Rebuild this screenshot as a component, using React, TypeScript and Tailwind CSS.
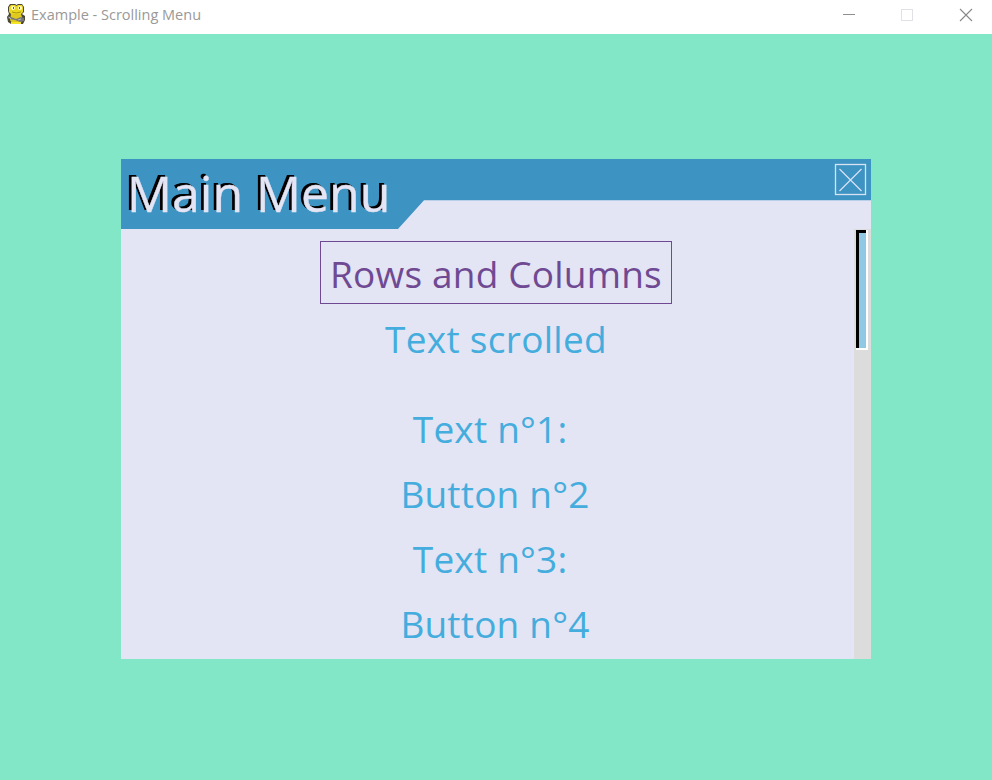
import React from "react";

const rows = ["Text n°1: ", "Button n°2", "Text n°3: ", "Button n°4"];

function SnakeIcon() {
  return (
    <svg width="20" height="22" viewBox="0 0 20 22" className="block shrink-0">
      <path d="M4 1h5l1.5 1L12 1h4l2 3v5l-2 2 3 2v4l-2 4H5l-3-2-1-5 2-3-1-3V4z" fill="#4a4732" />
      <path d="M5 2h4l1.5 1L12 2h4l1 2v5l-2 2H5L3 9V4z" fill="#ecd820" />
      <circle cx="7" cy="5" r="2" fill="#fffbc8" />
      <circle cx="14" cy="5" r="2" fill="#fffbc8" />
      <path d="M7.5 4v2M13.5 4v2" stroke="#6c6418" />
      <path d="M6 9q4 2 9 0" stroke="#a89410" fill="none" />
      <path d="M5 11h10l1 3-1 6H6l-2-3z" fill="#dfc91d" />
      <path d="M1 13l4 1 5 2 5-2 3 1v3l-4 1-5-2-6-1z" fill="#77777b" />
      <path d="M3 14l2 2M12 17l3-1" stroke="#b9b9bd" />
      <path d="M5 20h10" stroke="#f4e52b" strokeWidth="2" />
    </svg>
  );
}

function TitleBar() {
  return (
    <header className="flex h-[34px] items-start bg-white">
      <div className="flex h-[30px] flex-1 items-center pl-[6px]">
        <div className="-mt-[3px]">
          <SnakeIcon />
        </div>
        <span className="ml-[5px] whitespace-nowrap text-[14.5px] leading-[30px] text-[#999999]">
          Example - Scrolling Menu
        </span>
      </div>
      <svg width="150" height="34" viewBox="842 0 150 34" fill="none">
        <path d="M843 14.5h12" stroke="#8f8f8f" />
        <rect x="901.5" y="9.5" width="11" height="11" stroke="#e0e0e6" />
        <path d="M960 9l12 12M972 9l-12 12" stroke="#888888" strokeWidth="1.1" />
      </svg>
    </header>
  );
}

export default function App() {
  return (
    <div className="flex h-[780px] w-[992px] flex-col overflow-hidden bg-[#82e7c7] font-['Open_Sans',sans-serif]">
      <TitleBar />
      <main className="flex flex-1 justify-center pt-[125px]">
        <section className="relative flex h-[500px] w-[750px] flex-col bg-[#e3e4f4]">
          <svg width="750" height="70" viewBox="0 0 750 70" className="absolute left-0 top-0">
            <path d="M0 0H750V41.3H303L277 70H0z" fill="#3d94c3" />
          </svg>
          <div className="relative flex h-[70px] shrink-0 justify-between">
            <h1 className="ml-[6px] whitespace-nowrap text-[50px] leading-[69px] text-[#e3e4f4] [-webkit-text-stroke:0.4px_#e3e4f4] [text-shadow:-2px_-2px_0_#000,-3px_-2px_0_#000]">
              Main Menu
            </h1>
            <button className="mr-[3px] mt-[4px] h-[34px] w-[34px]" aria-label="Close">
              <svg width="34" height="34" viewBox="0 0 34 34" fill="none" stroke="#d9e2f2">
                <rect x="1.5" y="1.5" width="30" height="30" strokeWidth="1.3" />
                <path d="M5.5 6l22 22M27.5 6L5.5 28" strokeWidth="1.2" />
              </svg>
            </button>
          </div>
          <div className="relative flex min-h-0 flex-1">
            <div className="-mr-[17px] flex flex-1 flex-col items-center pt-[12px] text-[37px] text-[#44addd]">
              <div className="flex h-[63px] w-[352px] items-center justify-center border border-[#6f4a93] pt-[2px] text-[#6f4a93]">
                <span className="whitespace-pre tracking-[0.2px]">Rows and Columns</span>
              </div>
              <div className="flex h-[67px] items-center pt-[2px]">
                <span className="whitespace-pre tracking-[0.3px]">Text scrolled</span>
              </div>
              <div className="mt-[25px] flex flex-col items-center pr-[2px]">
                {rows.map((label) => (
                  <div key={label} className="flex h-[65px] items-center whitespace-pre tracking-[0.2px]">
                    {label}
                  </div>
                ))}
              </div>
            </div>
            <div className="relative h-[430px] w-[17px] shrink-0 bg-[#dcdcdc] pl-[2px] pt-px">
              <div className="h-[120px] w-[12px] bg-white pb-[2px] pr-[2px]">
                <div className="h-full bg-black pl-[3px] pt-[3px]">
                  <div className="h-full bg-[#91c8e4]" />
                </div>
              </div>
            </div>
          </div>
        </section>
      </main>
    </div>
  );
}
